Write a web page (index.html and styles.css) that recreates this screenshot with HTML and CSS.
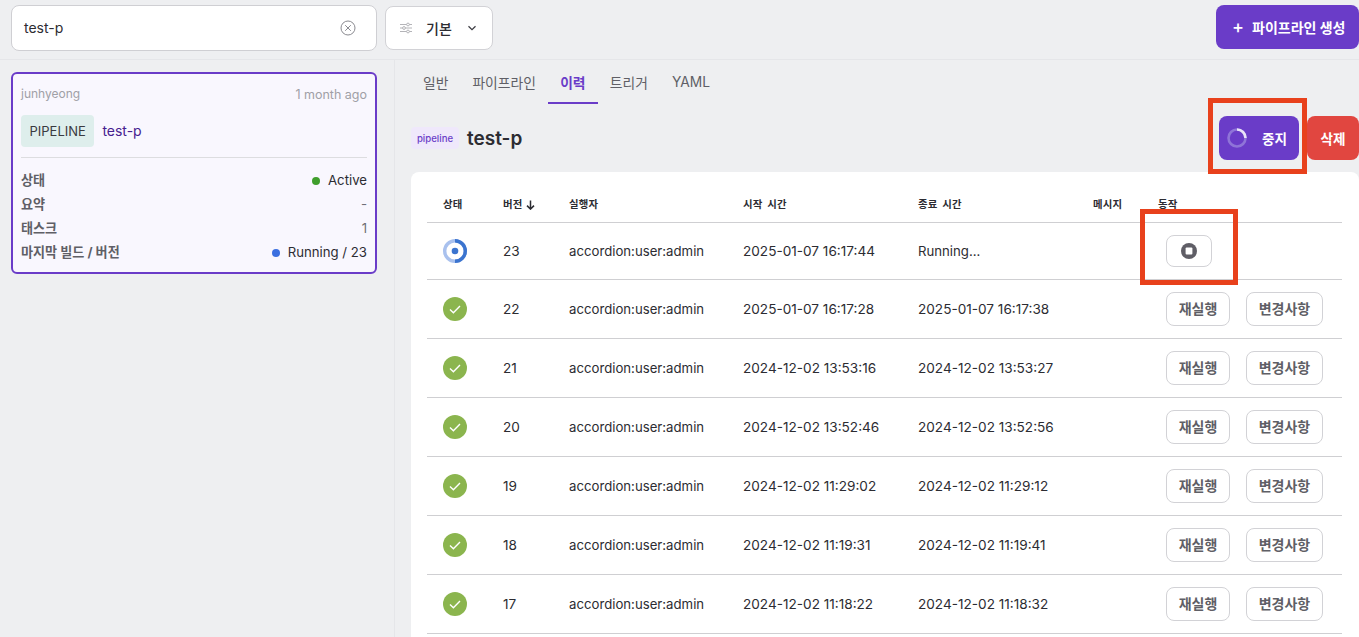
FILE: index.html
```html
<!DOCTYPE html>
<html lang="ko">
<head>
<meta charset="utf-8">
<title>파이프라인</title>
<link rel="stylesheet" href="styles.css">
</head>
<body>
<header class="topbar">
  <div class="search">
    <span class="search-text">test-p</span>
    <svg class="clear-icon" width="16" height="16" viewBox="0 0 16 16"><circle cx="8" cy="8" r="7" fill="none" stroke="#8a8a90" stroke-width="1"/><path d="M5.2 5.2l5.6 5.6M10.8 5.2l-5.6 5.6" stroke="#8a8a90" stroke-width="1" fill="none"/></svg>
  </div>
  <button class="select">
    <svg width="12" height="12" viewBox="0 0 12 12" fill="none" stroke="#b4b4b8" stroke-width="1"><path d="M0 2.5h12M0 6h12M0 9.5h12"/><circle cx="8" cy="2.5" r="1.4" fill="#fff"/><circle cx="4" cy="6" r="1.4" fill="#fff"/><circle cx="8" cy="9.5" r="1.4" fill="#fff"/></svg>
    <span class="select-label">기본</span>
    <svg width="10" height="6" viewBox="0 0 10 6" fill="none" stroke="#3a3a40" stroke-width="1.2"><path d="M1.5 1.2L5 4.6l3.5-3.4"/></svg>
  </button>
  <button class="btn-create"><span class="plus">+</span>파이프라인 생성</button>
</header>
<div class="layout">
  <aside class="sidebar">
    <article class="card">
      <div class="card-top"><span>junhyeong</span><span class="ago">1 month ago</span></div>
      <div class="card-name"><span class="chip">PIPELINE</span><span class="name-link">test-p</span></div>
      <dl class="facts">
        <div class="fact"><dt>상태</dt><dd><i class="dot dot-green"></i>Active</dd></div>
        <div class="fact"><dt>요약</dt><dd class="muted">-</dd></div>
        <div class="fact"><dt>태스크</dt><dd class="muted">1</dd></div>
        <div class="fact"><dt>마지막 빌드 / 버전</dt><dd><i class="dot dot-blue"></i>Running / 23</dd></div>
      </dl>
    </article>
  </aside>
  <main class="content">
    <nav class="tabs">
      <a class="tab">일반</a>
      <a class="tab">파이프라인</a>
      <a class="tab tab-active">이력</a>
      <a class="tab">트리거</a>
      <a class="tab">YAML</a>
    </nav>
    <div class="title-row">
      <span class="badge">pipeline</span>
      <h1 class="title">test-p</h1>
      <div class="title-actions">
        <button class="btn btn-stop">
          <svg class="spinner" width="20" height="20" viewBox="0 0 20 20" fill="none" stroke-width="2.6"><circle cx="10" cy="10" r="8.5" stroke="#8f74d8"/><path d="M10 1.5A8.5 8.5 0 0 1 18.5 10" stroke="#e9e3f8"/></svg>
          <span>중지</span>
        </button>
        <button class="btn btn-delete">삭제</button>
      </div>
    </div>
    <section class="panel">
      <table class="runs">
        <thead>
          <tr>
            <th class="c-status">상태</th>
            <th class="c-ver">버전<svg class="sort" width="9" height="10" viewBox="0 0 9 10" fill="none" stroke="#2c2c32" stroke-width="1.5"><path d="M4.5 0.5v8.5M1 5.6l3.5 3.5L8 5.6"/></svg></th>
            <th class="c-user">실행자</th>
            <th class="c-time">시작 시간</th>
            <th class="c-time">종료 시간</th>
            <th class="c-msg">메시지</th>
            <th>동작</th>
          </tr>
        </thead>
        <tbody>
          <tr class="row-first">
            <td><svg class="state" width="24" height="24" viewBox="0 0 24 24" fill="none" stroke-width="3.4"><circle cx="12" cy="12" r="10.3" stroke="#a9c1ee"/><path d="M12 1.7A10.3 10.3 0 0 1 12 22.3" stroke="#3b74cf"/><circle cx="12" cy="12" r="3.3" fill="#3b74cf" stroke="none"/></svg></td>
            <td class="num">23</td><td>accordion:user:admin</td><td class="num">2025-01-07 16:17:44</td><td>Running...</td><td></td>
            <td><button class="act act-stop"><svg width="16" height="16" viewBox="0 0 16 16"><circle cx="8" cy="8" r="8" fill="#5f5e66"/><rect x="4.6" y="4.6" width="6.8" height="6.8" rx="1" fill="#fff"/></svg></button></td>
          </tr>
          <tr>
            <td><svg class="state" width="24" height="24" viewBox="0 0 24 24"><circle cx="12" cy="12" r="12" fill="#8bb54e"/><path d="M7 12.4l3.4 3.3L17 9" fill="none" stroke="#fff" stroke-width="1.4"/></svg></td>
            <td class="num">22</td><td>accordion:user:admin</td><td class="num">2025-01-07 16:17:28</td><td class="num">2025-01-07 16:17:38</td><td></td>
            <td><div class="acts"><button class="act">재실행</button><button class="act">변경사항</button></div></td>
          </tr>
          <tr>
            <td><svg class="state" width="24" height="24" viewBox="0 0 24 24"><circle cx="12" cy="12" r="12" fill="#8bb54e"/><path d="M7 12.4l3.4 3.3L17 9" fill="none" stroke="#fff" stroke-width="1.4"/></svg></td>
            <td class="num">21</td><td>accordion:user:admin</td><td class="num">2024-12-02 13:53:16</td><td class="num">2024-12-02 13:53:27</td><td></td>
            <td><div class="acts"><button class="act">재실행</button><button class="act">변경사항</button></div></td>
          </tr>
          <tr>
            <td><svg class="state" width="24" height="24" viewBox="0 0 24 24"><circle cx="12" cy="12" r="12" fill="#8bb54e"/><path d="M7 12.4l3.4 3.3L17 9" fill="none" stroke="#fff" stroke-width="1.4"/></svg></td>
            <td class="num">20</td><td>accordion:user:admin</td><td class="num">2024-12-02 13:52:46</td><td class="num">2024-12-02 13:52:56</td><td></td>
            <td><div class="acts"><button class="act">재실행</button><button class="act">변경사항</button></div></td>
          </tr>
          <tr>
            <td><svg class="state" width="24" height="24" viewBox="0 0 24 24"><circle cx="12" cy="12" r="12" fill="#8bb54e"/><path d="M7 12.4l3.4 3.3L17 9" fill="none" stroke="#fff" stroke-width="1.4"/></svg></td>
            <td class="num">19</td><td>accordion:user:admin</td><td class="num">2024-12-02 11:29:02</td><td class="num">2024-12-02 11:29:12</td><td></td>
            <td><div class="acts"><button class="act">재실행</button><button class="act">변경사항</button></div></td>
          </tr>
          <tr>
            <td><svg class="state" width="24" height="24" viewBox="0 0 24 24"><circle cx="12" cy="12" r="12" fill="#8bb54e"/><path d="M7 12.4l3.4 3.3L17 9" fill="none" stroke="#fff" stroke-width="1.4"/></svg></td>
            <td class="num">18</td><td>accordion:user:admin</td><td class="num">2024-12-02 11:19:31</td><td class="num">2024-12-02 11:19:41</td><td></td>
            <td><div class="acts"><button class="act">재실행</button><button class="act">변경사항</button></div></td>
          </tr>
          <tr>
            <td><svg class="state" width="24" height="24" viewBox="0 0 24 24"><circle cx="12" cy="12" r="12" fill="#8bb54e"/><path d="M7 12.4l3.4 3.3L17 9" fill="none" stroke="#fff" stroke-width="1.4"/></svg></td>
            <td class="num">17</td><td>accordion:user:admin</td><td class="num">2024-12-02 11:18:22</td><td class="num">2024-12-02 11:18:32</td><td></td>
            <td><div class="acts"><button class="act">재실행</button><button class="act">변경사항</button></div></td>
          </tr>
        </tbody>
      </table>
    </section>
  </main>
</div>
<div class="callout callout-top"></div>
<div class="callout callout-row"></div>
</body>
</html>
```
FILE: styles.css
```css
* { box-sizing: border-box; }
html, body { height: 100%; }
body {
  margin: 0;
  height: 637px;
  overflow: hidden;
  background: #eeeff1;
  color: #2c2c32;
  font-family: Inter, "Noto Sans CJK KR", sans-serif;
  font-size: 14px;
}
button { font-family: inherit; cursor: pointer; }

.topbar {
  height: 60px;
  display: flex;
  align-items: flex-start;
  padding: 5px 0 0 11px;
  border-bottom: 1px solid #e5e6e9;
}
.search {
  width: 366px;
  height: 46px;
  padding: 0 20px 0 12px;
  display: flex;
  align-items: center;
  justify-content: space-between;
  background: #fff;
  border: 1px solid #cfcfd3;
  border-radius: 8px;
}
.search-text { font-size: 14px; color: #2c2c32; line-height: 1; }
.select {
  width: 108px;
  height: 44px;
  margin: 1px 0 0 8px;
  padding: 0 15px 0 14px;
  display: flex;
  align-items: center;
  background: #fff;
  border: 1px solid #d2d2d6;
  border-radius: 8px;
  color: #2c2c32;
}
.select-label { margin: 0 auto 0 14px; font-size: 14px; font-weight: 500; }
.btn-create {
  width: 143px;
  height: 44px;
  margin-left: auto;
  padding: 0 0 0 16px;
  display: flex;
  align-items: center;
  background: #6a3cc8;
  color: #fff;
  border: 0;
  border-radius: 8px;
  font-size: 14px;
  font-weight: 700;
  white-space: nowrap;
}
.plus { margin-right: 8px; font-size: 18px; font-weight: 500; line-height: 1; }

.layout { display: flex; height: 577px; }
.sidebar {
  width: 395px;
  flex: none;
  padding: 12px 17px 0 11px;
  border-right: 1px solid #e5e6e9;
}
.card {
  height: 202px;
  padding: 10px 8px 0 8px;
  background: #f9f7fe;
  border: 2px solid #6a3cc8;
  border-radius: 6px;
}
.card-top {
  display: flex;
  justify-content: space-between;
  align-items: center;
  height: 18px;
  font-size: 12px;
  color: #a0a0a6;
}
.ago { font-size: 12.5px; margin-top: 2px; }
.card-name {
  display: flex;
  align-items: center;
  gap: 8px;
  margin-top: 13px;
  padding-bottom: 10px;
  border-bottom: 1px solid #dddde0;
}
.chip {
  height: 32px;
  padding: 0 8.5px;
  display: flex;
  align-items: center;
  background: #deeeec;
  border-radius: 4px;
  font-size: 13px;
  color: #3a3a40;
}
.name-link { font-size: 14px; color: #47208f; line-height: 1; }
.facts { margin: 9px 0 0; }
.fact {
  display: flex;
  justify-content: space-between;
  align-items: center;
  height: 24px;
}
.fact dt { font-size: 13.1px; font-weight: 700; color: #5f5f66; }
.fact dd { margin: 1px 0 0; display: flex; align-items: center; font-size: 13.2px; color: #2c2c32; }
.fact .muted { color: #6f6f76; }
.dot { width: 8px; height: 8px; margin: 3px 8px 0 0; border-radius: 50%; }
.dot-green { background: #3f9e2c; }
.dot-blue { background: #3b6fe0; }

.content { flex: 1; min-width: 0; padding-left: 16px; }
.tabs { display: flex; height: 44px; }
.tab {
  height: 44px;
  padding: 0 12px 1px;
  display: flex;
  align-items: center;
  justify-content: center;
  color: #5f5f66;
  font-size: 13.8px;
}
.tab-active {
  width: 50px;
  padding-top: 1px;
  padding-bottom: 0;
  color: #6a3cc8;
  font-weight: 700;
  border-bottom: 2px solid #6a3cc8;
}
.title-row {
  display: flex;
  align-items: center;
  height: 44px;
  margin-top: 12px;
}
.badge {
  width: 48px;
  height: 22px;
  display: flex;
  align-items: center;
  justify-content: center;
  background: #efe8fb;
  border-radius: 4px;
  color: #6a3cc8;
  font-size: 9.6px;
  font-weight: 500;
}
.title { margin: 0 0 0 8px; font-size: 19px; font-weight: 600; color: #2c2c32; }
.title-actions { margin-left: auto; display: flex; gap: 8px; }
.btn {
  height: 44px;
  border: 0;
  border-radius: 8px;
  color: #fff;
  font-size: 13.6px;
  font-weight: 700;
  display: flex;
  align-items: center;
}
.btn-stop {
  width: 80px;
  padding: 0 0 0 8px;
  background: #6a3cc8;
  gap: 15px;
}
.btn-delete {
  width: 52px;
  justify-content: center;
  background: #e14640;
}
.panel {
  margin-top: 12px;
  height: 470px;
  padding: 13px 17px 0 16px;
  background: #fff;
  border-radius: 8px 8px 0 0;
}
.runs { width: 915px; table-layout: fixed; border-collapse: collapse; }
.c-status { width: 60px; }
.c-ver { width: 66px; }
.c-user { width: 174px; }
.c-time { width: 175px; }
.c-msg { width: 65px; }
.runs th {
  height: 37px;
  padding: 0 0 0 16px;
  text-align: left;
  font-size: 10.4px;
  font-weight: 700;
  color: #2c2c32;
  border-bottom: 1px solid #cfcfd2;
  letter-spacing: 0.2px;
  word-spacing: 2px;
}
.sort { margin-left: 3px; vertical-align: -2px; }
.runs td {
  height: 59px;
  padding: 0 0 0 16px;
  font-size: 13.2px;
  color: #2c2c32;
  border-bottom: 1px solid #cfcfd2;
}
.runs td.num { font-size: 13.6px; }
.row-first td { height: 57px; }
.state { display: block; }
.acts { display: flex; gap: 16px; margin-left: 8px; }
.act {
  height: 34px;
  width: 64px;
  padding: 0 0 2px;
  background: #fff;
  border: 1px solid #d2d2d6;
  border-radius: 8px;
  color: #5f5f66;
  font-size: 14px;
  font-weight: 700;
}
.act + .act { width: 77px; }
.act-stop {
  width: 46px;
  height: 32px;
  margin-left: 8px;
  padding: 0;
  display: flex;
  align-items: center;
  justify-content: center;
}

.callout { position: absolute; border: 5px solid #e8411c; }
.callout-top { left: 1208px; top: 98px; width: 99px; height: 76px; }
.callout-row { left: 1140px; top: 209px; width: 98px; height: 76px; }
```
